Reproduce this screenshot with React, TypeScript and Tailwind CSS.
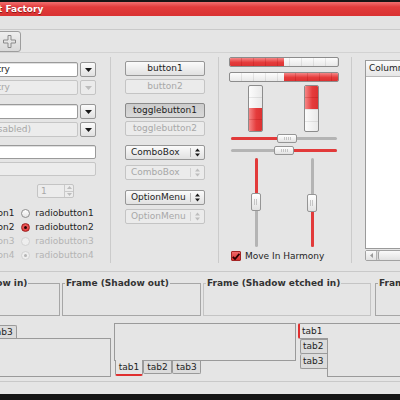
import React from "react";

type RState = "off" | "on" | "doff" | "don";

const FILL_H =
  "bg-[repeating-linear-gradient(90deg,transparent_0_11px,rgba(150,0,0,0.2)_11px_12px),linear-gradient(#f58686,#e53c3c_55%,#dc3232)]";
const TROUGH_H =
  "bg-[repeating-linear-gradient(90deg,transparent_0_11px,rgba(0,0,0,0.08)_11px_12px),linear-gradient(#fcfcfc,#e9e9e9)]";
const FILL_V =
  "bg-[repeating-linear-gradient(180deg,transparent_0_11px,rgba(150,0,0,0.2)_11px_12px),linear-gradient(90deg,#f58686,#e53c3c_55%,#dc3232)]";
const TROUGH_V =
  "bg-[repeating-linear-gradient(180deg,transparent_0_11px,rgba(0,0,0,0.08)_11px_12px),linear-gradient(90deg,#fcfcfc,#e9e9e9)]";

function Tri({ dir = "down", color = "#222" }: { dir?: "down" | "up" | "left"; color?: string }) {
  const d = dir === "down" ? "M0 0h7L3.5 4z" : dir === "up" ? "M0 4h7L3.5 0z" : "M4 0v7L0 3.5z";
  const w = dir === "left" ? 4 : 7;
  const h = dir === "left" ? 7 : 4;
  return (
    <svg width={w} height={h} viewBox={`0 0 ${w} ${h}`}>
      <path d={d} fill={color} />
    </svg>
  );
}

function UpDown({ color }: { color: string }) {
  return (
    <svg width="5" height="9" viewBox="0 0 5 9">
      <path d="M0 3.5L2.5 0.5 5 3.5zM0 5.5h5L2.5 8.5z" fill={color} />
    </svg>
  );
}

function Btn({
  children,
  disabled,
  pressed,
  className = "",
}: {
  children?: React.ReactNode;
  disabled?: boolean;
  pressed?: boolean;
  className?: string;
}) {
  const look = disabled
    ? "border-[#c4c4c4] bg-[#ebebeb] text-[#a8a8a8]"
    : pressed
    ? "border-[#8a8a8a] bg-[linear-gradient(#cccccc,#d9d9d9)] text-[#1e1e1e]"
    : "border-[#979797] bg-[linear-gradient(#fbfbfb,#e1e1e1)] text-[#1e1e1e]";
  return (
    <div className={`flex items-center justify-center border rounded-[2px] ${look} ${className}`}>
      {children}
    </div>
  );
}

function ComboEntry({
  text,
  entryDisabled,
  btnDisabled,
  className = "",
}: {
  text?: string;
  entryDisabled?: boolean;
  btnDisabled?: boolean;
  className?: string;
}) {
  return (
    <div className={`flex items-center gap-[2px] ${className}`}>
      <div
        className={`-ml-[19px] w-[97px] h-[15px] pl-[4px] flex items-center border rounded-[2px] whitespace-nowrap ${
          entryDisabled
            ? "bg-[#ececec] border-[#c6c6c6] text-[#a6a6a6]"
            : "bg-white border-[#9a9a9a] shadow-[inset_0_1px_0_#e0e0e0]"
        }`}
      >
        {text}
      </div>
      <Btn disabled={btnDisabled} className="w-[16px] h-[15px]">
        <Tri color={btnDisabled ? "#bdbdbd" : "#1a1a1a"} />
      </Btn>
    </div>
  );
}

function Radio({ state }: { state: RState }) {
  if (state === "on")
    return (
      <div className="w-[9px] h-[9px] rounded-full border border-[#9e2020] bg-[radial-gradient(circle_at_50%_40%,#f46a6a,#d62a2a)] flex items-center justify-center">
        <div className="w-[3px] h-[3px] rounded-full bg-[#2a0000]" />
      </div>
    );
  if (state === "doff")
    return <div className="w-[9px] h-[9px] rounded-full border border-[#d2d2d2] bg-[#eeeeee]" />;
  if (state === "don")
    return (
      <div className="w-[9px] h-[9px] rounded-full border border-[#d2d2d2] bg-[#eeeeee] flex items-center justify-center">
        <div className="w-[3px] h-[3px] rounded-full bg-[#b4b4b4]" />
      </div>
    );
  return <div className="w-[9px] h-[9px] rounded-full border border-[#8e8e8e] bg-[linear-gradient(#ffffff,#e4e4e4)]" />;
}

function RadioRow({ n, left, right }: { n: number; left: RState; right: RState }) {
  const dimL = left === "doff" || left === "don";
  const dimR = right === "doff" || right === "don";
  return (
    <div className="h-[14px] flex items-center -ml-[57px]">
      <Radio state={left} />
      <span className={`ml-[4px] ${dimL ? "text-[#b4b4b4]" : ""}`}>radiobutton{n}</span>
      <div className="ml-[7px]">
        <Radio state={right} />
      </div>
      <span className={`ml-[5px] ${dimR ? "text-[#b4b4b4]" : ""}`}>radiobutton{n}</span>
    </div>
  );
}

function Combo({ text, disabled, className = "" }: { text: string; disabled?: boolean; className?: string }) {
  return (
    <Btn disabled={disabled} className={`w-[80px] h-[15px] !justify-start ${className}`}>
      <span className="w-[64px] pl-[5px]">{text}</span>
      <div className={`w-px h-[9px] ${disabled ? "bg-[#d2d2d2]" : "bg-[#b5b5b5]"}`} />
      <div className="ml-[4px] flex items-center">
        <UpDown color={disabled ? "#bdbdbd" : "#1a1a1a"} />
      </div>
    </Btn>
  );
}

function Thumb({ vertical }: { vertical?: boolean }) {
  return (
    <div
      className={`${
        vertical ? "w-[10px] h-[18px]" : "w-[20px] h-[9px]"
      } rounded-[2px] border border-[#959595] bg-[linear-gradient(#ffffff,#e2e2e2)] flex items-center justify-center`}
    >
      <div
        className={`${
          vertical ? "w-[4px] h-[6px]" : "w-[7px] h-[3px]"
        } bg-[repeating-linear-gradient(90deg,#c4c4c4_0_1px,transparent_1px_2px)]`}
      />
    </div>
  );
}

function HSlider({ at, redLeft, className = "" }: { at: number; redLeft: boolean; className?: string }) {
  return (
    <div className={`relative w-[106px] h-[9px] flex items-center ${className}`}>
      <div className="w-full h-[3px] rounded-full bg-[#b4b4b4] overflow-hidden flex">
        {redLeft ? (
          <div className="h-full bg-[#e23a3a]" style={{ width: at + 4 }} />
        ) : (
          <div className="h-full bg-[#e23a3a] ml-auto" style={{ width: 106 - at - 16 }} />
        )}
      </div>
      <div className="absolute top-0" style={{ left: at }}>
        <Thumb />
      </div>
    </div>
  );
}

function VSlider({ at, redTop, className = "" }: { at: number; redTop: boolean; className?: string }) {
  return (
    <div className={`relative w-[10px] h-[89px] flex justify-center ${className}`}>
      <div className="w-[3px] h-full rounded-full bg-[#b4b4b4] overflow-hidden flex flex-col">
        {redTop ? (
          <div className="w-full bg-[#e23a3a]" style={{ height: at + 4 }} />
        ) : (
          <div className="w-full bg-[#e23a3a] mt-auto" style={{ height: 89 - at - 14 }} />
        )}
      </div>
      <div className="absolute left-0" style={{ top: at }}>
        <Thumb vertical />
      </div>
    </div>
  );
}

function Column1() {
  return (
    <div className="w-[110px] shrink-0 pt-[9px] flex flex-col">
      <ComboEntry text="Entry" />
      <ComboEntry text="Entry" entryDisabled btnDisabled className="mt-[3px]" />
      <ComboEntry className="mt-[9px]" />
      <ComboEntry text="(disabled)" entryDisabled className="mt-[3px]" />
      <div className="mt-[8px] -ml-[15px] w-[111px] h-[14px] border border-[#9a9a9a] rounded-[2px] bg-white shadow-[inset_0_1px_0_#e0e0e0]" />
      <div className="mt-[3px] -ml-[15px] w-[111px] h-[14px] border border-[#c6c6c6] rounded-[2px] bg-[#ececec]" />
      <div className="mt-[8px] ml-[37px] w-[37px] h-[14px] flex border border-[#c4c4c4] rounded-[2px] bg-[#ececec] text-[#a8a8a8]">
        <div className="flex-1 pl-[3px] flex items-center">1</div>
        <div className="w-[9px] border-l border-[#cacaca] flex flex-col">
          <div className="flex-1 flex items-center justify-center border-b border-[#cacaca]">
            <svg width="5" height="3" viewBox="0 0 5 3">
              <path d="M0 3h5L2.5 0z" fill="#bdbdbd" />
            </svg>
          </div>
          <div className="flex-1 flex items-center justify-center">
            <svg width="5" height="3" viewBox="0 0 5 3">
              <path d="M0 0h5L2.5 3z" fill="#bdbdbd" />
            </svg>
          </div>
        </div>
      </div>
      <div className="mt-[8px] flex flex-col">
        <RadioRow n={1} left="off" right="off" />
        <RadioRow n={2} left="on" right="on" />
        <RadioRow n={3} left="doff" right="doff" />
        <RadioRow n={4} left="don" right="don" />
      </div>
    </div>
  );
}

function Column2() {
  return (
    <div className="w-[107px] shrink-0 pt-[8px] pl-[14px] flex flex-col">
      <Btn className="w-[80px] h-[15px]">button1</Btn>
      <Btn disabled className="w-[80px] h-[15px] mt-[3px]">button2</Btn>
      <Btn pressed className="w-[80px] h-[15px] mt-[9px]">togglebutton1</Btn>
      <Btn disabled className="w-[80px] h-[15px] mt-[3px]">togglebutton2</Btn>
      <Combo text="ComboBox" className="mt-[9px]" />
      <Combo text="ComboBox" disabled className="mt-[5px]" />
      <Combo text="OptionMenu" className="mt-[10px]" />
      <Combo text="OptionMenu" disabled className="mt-[4px]" />
    </div>
  );
}

function Column3() {
  return (
    <div className="w-[132px] shrink-0 pt-[4px] flex flex-col">
      <div className={`ml-[10px] w-[110px] h-[10px] flex border border-[#8c8c8c] rounded-[2px] overflow-hidden ${TROUGH_H}`}>
        <div className={`w-[54px] h-full ${FILL_H}`} />
      </div>
      <div className={`mt-[5px] ml-[10px] w-[110px] h-[10px] flex justify-end border border-[#8c8c8c] rounded-[2px] overflow-hidden ${TROUGH_H}`}>
        <div className={`w-[54px] h-full ${FILL_H}`} />
      </div>
      <div className="mt-[3px] ml-[29px] flex gap-[41px]">
        <div className={`w-[15px] h-[47px] flex flex-col justify-end border border-[#8c8c8c] rounded-[2px] overflow-hidden ${TROUGH_V}`}>
          <div className={`h-[23px] w-full ${FILL_V}`} />
        </div>
        <div className={`w-[15px] h-[47px] flex flex-col border border-[#8c8c8c] rounded-[2px] overflow-hidden ${TROUGH_V}`}>
          <div className={`h-[23px] w-full ${FILL_V}`} />
        </div>
      </div>
      <HSlider at={46} redLeft className="mt-[2px] ml-[12px]" />
      <HSlider at={43} redLeft={false} className="mt-[3px] ml-[12px]" />
      <div className="mt-[3px] ml-[32px] flex gap-[46px]">
        <VSlider at={35} redTop />
        <VSlider at={36} redTop={false} />
      </div>
      <div className="mt-[4px] ml-[12px] h-[10px] flex items-center">
        <div className="w-[10px] h-[10px] rounded-[1px] border border-[#a52424] bg-[linear-gradient(#f06a6a,#d83030)] flex items-center justify-center">
          <svg width="8" height="7" viewBox="0 0 8 7">
            <path d="M0.8 3.8L3 6 7.4 0.8" stroke="#2a0000" strokeWidth="1.8" fill="none" />
          </svg>
        </div>
        <span className="ml-[4px]">Move In Harmony</span>
      </div>
    </div>
  );
}

function Column4() {
  return (
    <div className="flex-1 pt-[7px] pl-[13px] flex flex-col">
      <div className="w-[60px] h-[189px] border border-[#9a9a9a] bg-white flex flex-col">
        <div className="h-[16px] border-b border-[#b9b9b9] bg-[linear-gradient(#fbfbfb,#e6e6e6)] flex items-center pl-[3px] whitespace-nowrap">
          Column
        </div>
      </div>
      <div className="mt-px w-[60px] h-[11px] flex border border-[#a2a2a2] rounded-[2px] bg-[#dadada]">
        <div className="w-[11px] border-r border-[#b4b4b4] bg-[linear-gradient(#fafafa,#e2e2e2)] flex items-center justify-center">
          <svg width="3" height="5" viewBox="0 0 3 5">
            <path d="M3 0v5L0 2.5z" fill="#9a9a9a" />
          </svg>
        </div>
        <div className="flex-1 ml-px rounded-[2px] border-l border-[#a2a2a2] bg-[linear-gradient(#fafafa,#e2e2e2)]" />
      </div>
    </div>
  );
}

function Sep() {
  return <div className="w-px h-[206px] mt-[4px] shrink-0 bg-[#cbcbcb]" />;
}

function Frame({ label, className, border }: { label: string; className: string; border: string }) {
  return (
    <fieldset className={`h-[38px] shrink-0 border ${border} px-[2px] ${className}`}>
      <legend className="px-px font-bold leading-[11px] text-[#333] whitespace-nowrap">{label}</legend>
    </fieldset>
  );
}

function Frames() {
  return (
    <div className="h-[44px] pt-[6px] flex items-start">
      <Frame label="Frame (Shadow in)" className="-ml-[72px] w-[132px]" border="border-[#a6a6a6]" />
      <Frame label="Frame (Shadow out)" className="ml-[2px] w-[139px]" border="border-[#a6a6a6]" />
      <Frame label="Frame (Shadow etched in)" className="ml-[2px] w-[168px]" border="border-[#c4c4c4]" />
      <Frame label="Frame (Shadow etched out)" className="ml-[4px] w-[170px]" border="border-[#a6a6a6]" />
    </div>
  );
}

const TAB_IDLE = "border-[#9a9a9a] bg-[#dcdcdc]";

function Notebooks() {
  return (
    <div className="h-[65px] pt-[7px] flex items-start">
      {/* tabs on top */}
      <div className="-ml-[72px] w-[183px] mt-[2px] shrink-0 flex flex-col">
        <div className="h-[13px] pl-[2px] flex items-end">
          <div className="w-[29px] h-[13px] flex items-center justify-center">tab1</div>
          <div className={`w-[29px] h-[13px] border border-b-0 rounded-t-[2px] ${TAB_IDLE} flex items-center justify-center`}>tab2</div>
          <div className={`w-[29px] h-[13px] border border-b-0 rounded-t-[2px] ${TAB_IDLE} flex items-center justify-center`}>tab3</div>
        </div>
        <div className="h-[39px] border border-[#9a9a9a]" />
      </div>
      {/* tabs at bottom */}
      <div className="ml-[3px] w-[182px] shrink-0 flex flex-col">
        <div className="h-[38px] border border-[#9a9a9a]" />
        <div className="pl-px flex items-start">
          <div className="relative -mt-px w-[28px] h-[16px] bg-[#e5e5e5] border-x border-[#9a9a9a] border-b-2 border-b-[#e03030] rounded-b-[2px] flex items-center justify-center">
            tab1
          </div>
          <div className={`w-[29px] h-[13px] border border-t-0 rounded-b-[2px] ${TAB_IDLE} flex items-center justify-center`}>tab2</div>
          <div className={`w-[29px] h-[13px] border border-t-0 rounded-b-[2px] ${TAB_IDLE} flex items-center justify-center`}>tab3</div>
        </div>
      </div>
      {/* tabs on the left */}
      <div className="ml-[2px] shrink-0 flex">
        <div className="w-[29px] flex flex-col items-end">
          <div className="relative z-10 -mr-px w-[30px] h-[16px] bg-[#e5e5e5] border-y border-[#9a9a9a] border-l-2 border-l-[#e03030] rounded-l-[2px] flex items-center pl-[2px]">
            tab1
          </div>
          <div className={`w-[27px] h-[15px] border border-r-0 rounded-l-[2px] ${TAB_IDLE} flex items-center pl-[2px]`}>tab2</div>
          <div className={`w-[27px] h-[15px] border border-r-0 border-t-0 rounded-l-[2px] ${TAB_IDLE} flex items-center pl-[2px]`}>tab3</div>
        </div>
        <div className="w-[90px] h-[54px] border border-[#9a9a9a]" />
      </div>
    </div>
  );
}

export default function App() {
  return (
    <div className="w-[400px] h-[400px] overflow-hidden bg-[#e5e5e5] text-[9px] leading-none text-[#1e1e1e] font-['DejaVu_Sans',sans-serif] flex flex-col">
      <div className="h-[2px] shrink-0 bg-[#151515]" />
      <div className="h-[14px] shrink-0 bg-[linear-gradient(#f07070,#e23c3c_35%,#d93232)] flex items-center">
        <span className="-ml-[2px] font-bold text-white [text-shadow:0_1px_0_rgba(80,0,0,0.6)]">t Factory</span>
      </div>
      <div className="h-[14px] shrink-0 bg-[#e3e3e3] border-b border-[#c9c9c9]" />
      <div className="h-[23px] shrink-0 flex items-center border-b border-[#d2d2d2]">
        <div className="-ml-[6px] w-[27px] h-[21px] rounded-[3px] border border-[#9d9d9d] bg-[linear-gradient(#eeeeee,#d9d9d9)] flex items-center justify-end pr-[4px]">
          <svg width="13" height="13" viewBox="0 0 13 13">
            <path d="M5 0.5h3v4.5h4.5v3H8v4.5H5V8H0.5V5H5z" fill="#e4e4e4" stroke="#8a8a8a" strokeWidth="1" />
          </svg>
        </div>
      </div>
      <div className="h-[218px] shrink-0 flex overflow-hidden">
        <Column1 />
        <Sep />
        <Column2 />
        <Sep />
        <Column3 />
        <Sep />
        <Column4 />
      </div>
      <div className="h-px shrink-0 bg-[#c9c9c9]" />
      <Frames />
      <Notebooks />
      <div className="h-px shrink-0 bg-[#c9c9c9]" />
      <div className="h-[12px] shrink-0" />
      <div className="h-[6px] shrink-0 bg-[#151515]" />
    </div>
  );
}
